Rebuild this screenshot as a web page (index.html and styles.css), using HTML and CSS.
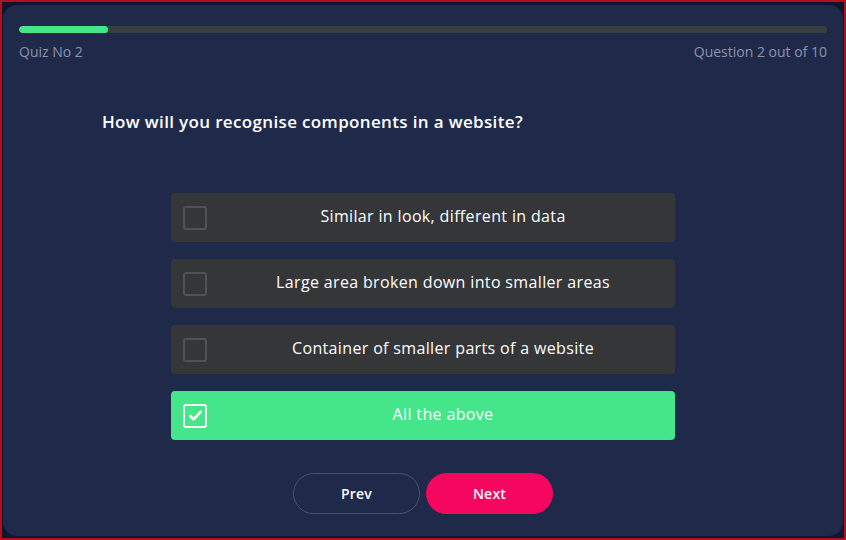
FILE: index.html
```html
<!DOCTYPE html>
<html lang="en">
<head>
<meta charset="utf-8">
<title>Quiz</title>
<link rel="stylesheet" href="styles.css">
</head>
<body>
<div class="frame">
  <main class="card">
    <div class="progress"><div class="progress-fill" style="width: 11%"></div></div>
    <div class="meta">
      <span>Quiz No 2</span>
      <span>Question 2 out of 10</span>
    </div>
    <h1 class="question">How will you recognise components in a website?</h1>
    <ul class="options">
      <li class="option"><span class="check"></span><span class="label">Similar in look, different in data</span></li>
      <li class="option"><span class="check"></span><span class="label">Large area broken down into smaller areas</span></li>
      <li class="option"><span class="check"></span><span class="label">Container of smaller parts of a website</span></li>
      <li class="option selected"><span class="check"><svg viewBox="0 0 16 16" width="17" height="17"><path d="M3.2 8.6l3 3L12.8 4.6" fill="none" stroke="#fff" stroke-width="2.6" stroke-linecap="round" stroke-linejoin="round"/></svg></span><span class="label">All the above</span></li>
    </ul>
    <div class="actions">
      <button class="btn btn-prev">Prev</button>
      <button class="btn btn-next">Next</button>
    </div>
  </main>
</div>
</body>
</html>
```

FILE: styles.css
```css
* { box-sizing: border-box; }
html, body { margin: 0; padding: 0; }
body {
  width: 846px;
  height: 540px;
  font-family: "Open Sans", "Liberation Sans", sans-serif;
  background: #0f1434;
}
.frame {
  width: 846px;
  height: 540px;
  border: 2px solid #b3101c;
  padding: 3px 1px 2px 1px;
  background: #0f1434;
}
.card {
  height: 100%;
  background: #1f2949;
  border-radius: 14px;
  padding: 21px 16px 0 16px;
  display: flex;
  flex-direction: column;
}
.progress {
  height: 7px;
  background: #3a3e3f;
  border-radius: 4px;
  overflow: hidden;
}
.progress-fill {
  height: 100%;
  background: #45e68a;
  border-radius: 4px;
}
.meta {
  margin-top: 9px;
  display: flex;
  justify-content: space-between;
  font-size: 14px;
  line-height: 20px;
  font-weight: 500;
  color: #8c94ad;
}
.question {
  margin: 48px 0 0 0;
  padding-left: 83px;
  font-size: 17px;
  line-height: 24px;
  font-weight: 600;
  letter-spacing: 0.35px;
  color: #ffffff;
}
.options {
  list-style: none;
  margin: 59px auto 0 auto;
  padding: 0;
  width: 504px;
  display: flex;
  flex-direction: column;
  gap: 17px;
}
.option {
  height: 49px;
  background: #343638;
  border-radius: 4px;
  display: flex;
  align-items: center;
  padding: 0 12px;
  color: #ffffff;
  font-size: 16px;
  font-weight: 500;
  letter-spacing: 0.35px;
}
.check {
  width: 24px;
  height: 24px;
  border: 2px solid #505254;
  border-radius: 3px;
  display: flex;
  align-items: center;
  justify-content: center;
  flex: none;
}
.label {
  flex: 1;
  text-align: center;
  padding-left: 16px;
  margin-top: -3px;
}
.option.selected {
  background: #45e68a;
}
.option.selected .check {
  border-color: #ffffff;
}
.actions {
  margin-top: 33px;
  display: flex;
  justify-content: center;
  gap: 6px;
}
.btn {
  width: 127px;
  height: 41px;
  border-radius: 21px;
  font-family: inherit;
  font-size: 14px;
  font-weight: 600;
  letter-spacing: 0.2px;
  color: #ffffff;
  cursor: pointer;
  padding-bottom: 2px;
}
.btn-prev {
  background: transparent;
  border: 1px solid #4a5270;
}
.btn-next {
  background: #f5065f;
  border: none;
}
```
